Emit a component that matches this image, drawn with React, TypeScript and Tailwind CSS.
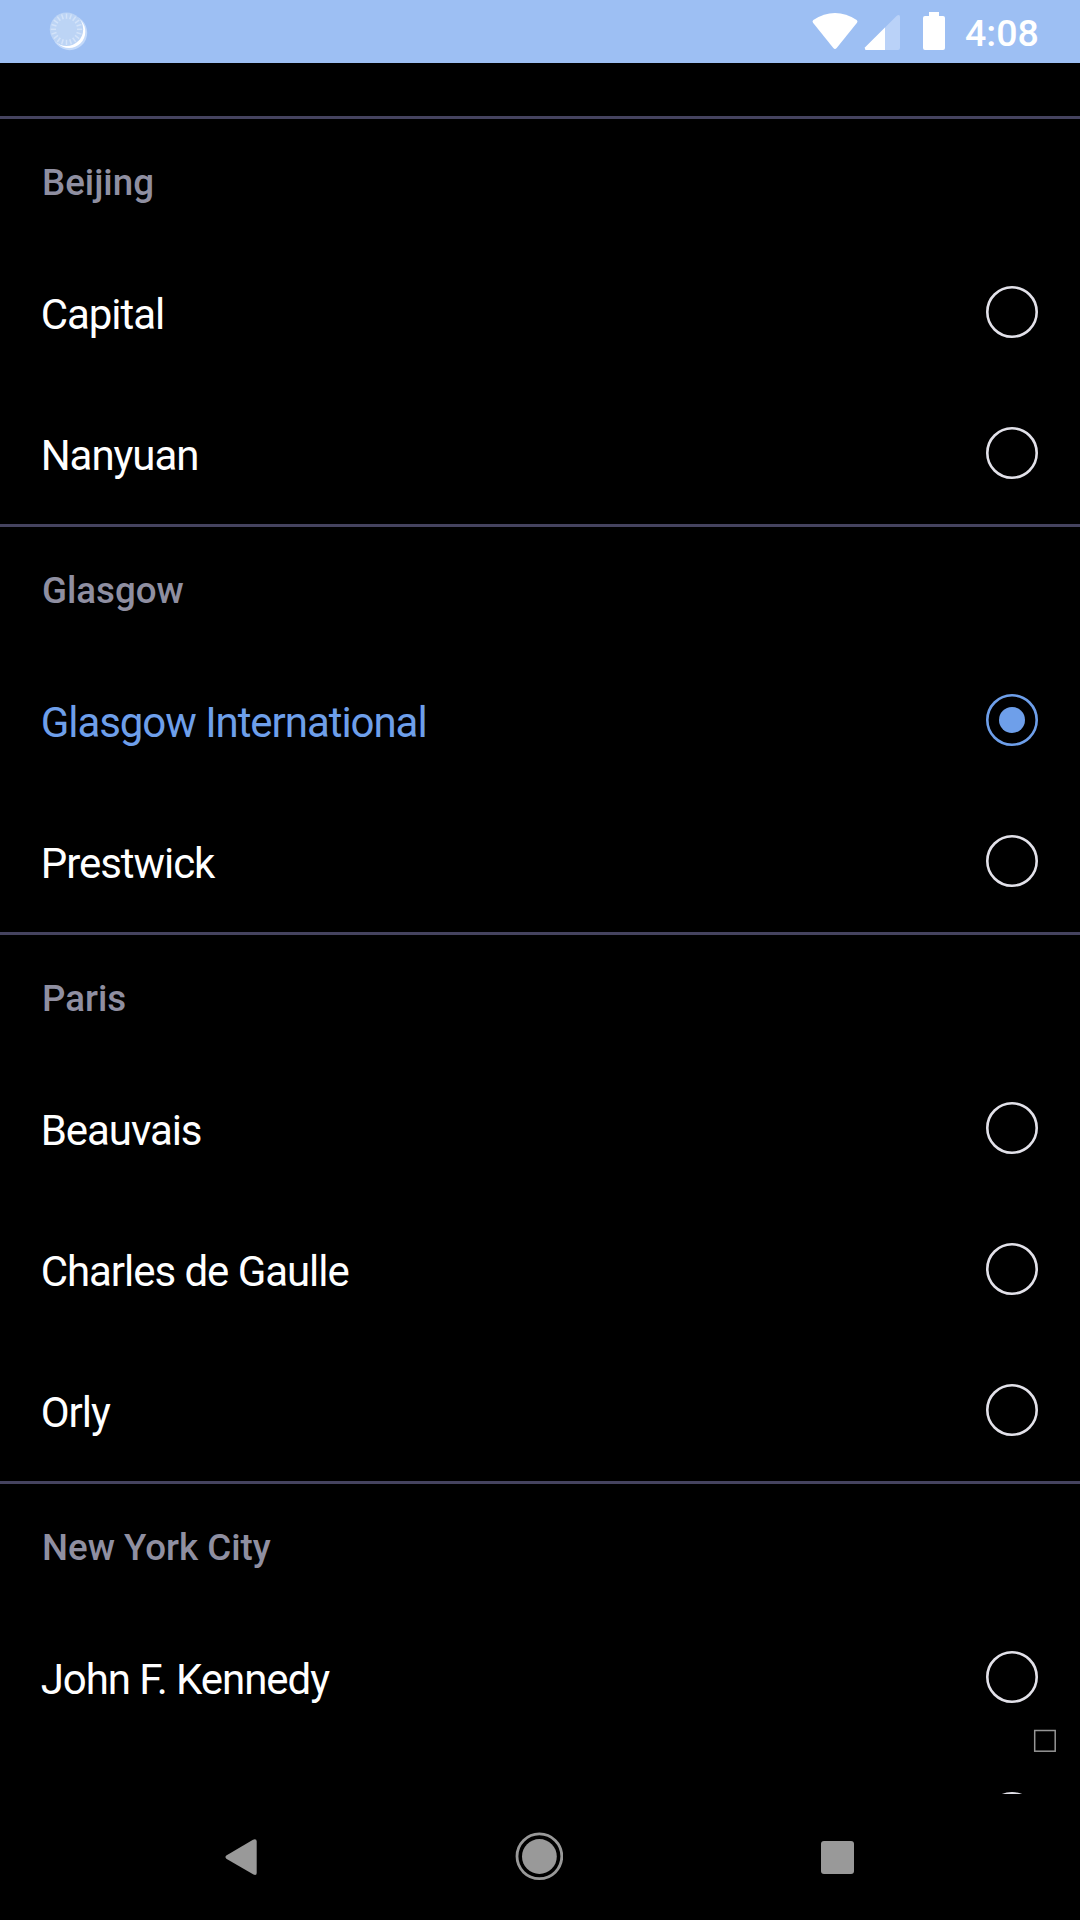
type Section = { city: string; airports: string[] };

const SELECTED = "Glasgow International";

const SECTIONS: Section[] = [
  { city: "Beijing", airports: ["Capital", "Nanyuan"] },
  { city: "Glasgow", airports: ["Glasgow International", "Prestwick"] },
  { city: "Paris", airports: ["Beauvais", "Charles de Gaulle", "Orly"] },
  { city: "New York City", airports: ["John F. Kennedy", ""] },
];

const TICKS = Array.from({ length: 20 }, (_, i) => i * 18);

function Spinner() {
  return (
    <svg className="ml-12 h-[63px] w-11" viewBox="48 0 44 63">
      <circle cx="69.7" cy="32.7" r="17.5" fill="#c4dafa" />
      <circle cx="69" cy="31.8" r="16.3" fill="#fff" />
      <circle cx="66.5" cy="29.3" r="16.7" fill="#bcd4f5" />
      {TICKS.map((angle) => (
        <path
          key={angle}
          d="M66.5 13.6v5.2"
          stroke="#d3e3f9"
          strokeWidth="1.5"
          transform={`rotate(${angle} 66.5 29.3)`}
        />
      ))}
    </svg>
  );
}

function StatusBar() {
  return (
    <header className="flex h-[63px] shrink-0 items-center justify-between bg-[#9dbff3] pr-[42px] text-white">
      <Spinner />
      <div className="flex items-center">
        <svg className="h-[63px] w-[136px]" viewBox="810 0 136 63" fill="#fff">
          <path d="M813 22.8Q811.9 21.3 813.3 20Q824 13 835 13T856.700 20Q858.100 21.300 857 22.800L836.700 48Q835 49.800 833.300 48Z" />
          <path
            d="M867 50Q864 50 865.200 47.200L896.500 15.900Q900 13.800 900 17V48Q900 50 898 50Z"
            fill="#bad2f8"
          />
          <path d="M867 50Q864 50 865.200 47.200L885 27.400V50Z" />
          <path d="M929 16V12H939V16H943Q945 16 945 18V48Q945 50 943 50H925Q923 50 923 48V18Q923 16 925 16Z" />
        </svg>
        <span className="ml-[19px] w-[73px] pt-[3px] text-[37.500px] leading-[44px] font-medium">4:08</span>
      </div>
    </header>
  );
}

function Radio({ checked }: { checked: boolean }) {
  return (
    <svg
      className={checked ? "mt-11 size-[52px] text-[#6e9fea]" : "mt-11 size-[52px] text-[#e2e1e9]"}
      viewBox="0 0 52 52"
    >
      <circle cx="26" cy="26" r="24.700" fill="none" stroke="currentColor" strokeWidth="2.600" />
      {checked && <circle cx="26" cy="26" r="13" fill="currentColor" />}
    </svg>
  );
}

function AirportRow({ name }: { name: string }) {
  const checked = name === SELECTED;
  return (
    <li
      className={
        checked
          ? "flex h-[141px] items-start justify-between pr-[42px] pl-[40.700px] text-[#6e9fea]"
          : "flex h-[141px] items-start justify-between pr-[42px] pl-[40.700px] text-white"
      }
    >
      <span className="mt-12 text-[42px] leading-[49px] tracking-[-1.050px]">{name}</span>
      <Radio checked={checked} />
    </li>
  );
}

function NavBar() {
  return (
    <nav className="flex h-[126px] shrink-0 items-center bg-black pl-[225px] text-[#999]">
      <svg className="h-[126px] w-8" viewBox="225 1794 32 126" fill="currentColor">
        <path d="M226.300 1858.700Q224.600 1857.100 226.300 1855.500L253 1839.700Q256.700 1838.500 256.700 1841.500V1873Q256.700 1875.700 253.500 1874.600Z" />
      </svg>
      <svg className="ml-[258px] h-[126px] w-12" viewBox="515 1794 48 126" fill="currentColor">
        <circle cx="539.400" cy="1856.300" r="22.400" fill="none" stroke="currentColor" strokeWidth="2.800" />
        <circle cx="539.400" cy="1856.500" r="17.400" />
      </svg>
      <div className="ml-[258px] h-[33px] w-[33px] rounded-[3px] bg-current" />
    </nav>
  );
}

export default function App() {
  return (
    <div className="relative flex h-[1920px] w-[1080px] flex-col overflow-hidden bg-black font-['Roboto',sans-serif]">
      <StatusBar />
      <main className="min-h-0 flex-1 overflow-hidden pt-[53px]">
        {SECTIONS.map((section) => (
          <section key={section.city} className="border-t-[3px] border-[#45435f]">
            <h2 className="h-[123px] px-[42px] pt-[42px] text-[36.700px] leading-[43px] font-medium text-[#8f8fa1]">
              {section.city}
            </h2>
            <ul>
              {section.airports.map((name) => (
                <AirportRow key={name} name={name} />
              ))}
            </ul>
          </section>
        ))}
      </main>
      <NavBar />
      <svg className="absolute top-[1729px] left-[1033px] size-6" viewBox="0 0 24 24">
        <rect x="1.700" y="1.500" width="20.500" height="20.700" fill="none" stroke="#969696" strokeWidth="1.500" />
      </svg>
    </div>
  );
}
